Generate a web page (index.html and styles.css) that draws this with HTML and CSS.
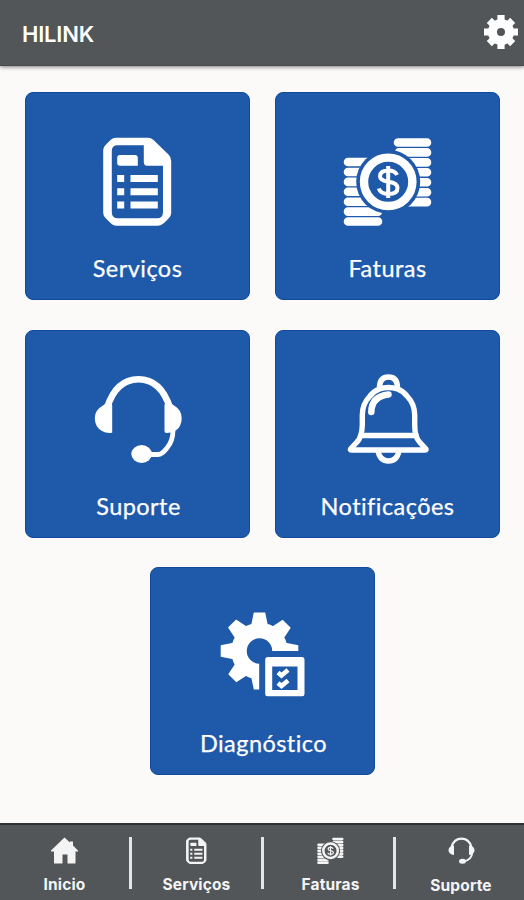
FILE: index.html
```
<!DOCTYPE html>
<html lang="pt-BR">
<head>
  <meta charset="UTF-8">
  <meta name="viewport" content="width=device-width, initial-scale=1.0">
  <title>HILINK</title>
  <link rel="stylesheet" href="styles.css">
</head>
<body>
  <svg class="icons" width="0" height="0">
    <symbol id="doc" viewBox="0 0 90 90">
      <path fill-rule="evenodd" d="M23 1.700H55Q58 1.700 60.500 4L75.500 18.500Q78.200 21 78.200 25V77Q78.200 80 75.500 82.500L71 87Q68 89.700 65 89.700H23Q20 89.700 17.500 87L13 82.500Q10.200 80 10.200 77V14Q10.200 11 13 8.500L17.500 4Q20 1.700 23 1.700ZM24.500 9.300Q18.800 9.300 18.800 15V76Q18.800 82.300 25 82.300H64Q70 82.300 70 76V29.700H54Q50.800 29.700 50.800 26V9.300Z"/>
      <path d="M27 19H42Q44.800 19 44.800 22V29.700H27Q24.200 29.700 24.200 27V22Q24.200 19 27 19ZM24.200 39h7v7h-7zM37.500 39h27.300v7H37.500zM24.200 52.300h7v7h-7zM37.500 52.300h27.300v7H37.500zM24.200 65.500h7v7h-7zM37.500 65.500h27.300v7H37.500z"/>
    </symbol>
    <symbol id="coins" viewBox="0 0 90 90">
      <g fill="none" stroke="currentColor" stroke-width="8.600" stroke-linecap="round">
        <path d="M5 26h28M5 36h28M5 45.900h28M5 55.800h28M5 65.700h28M5 75.600h30M5 85.500h30"/>
        <path d="M55 6.500h29M56 16.400h28M56 26.400h28M56 36.300h28M56 46.300h28M56 56.200h28M56 66.100h28"/>
      </g>
      <circle class="gap" cx="45.200" cy="45.800" r="32"/>
      <circle cx="45.200" cy="45.800" r="24.200" fill="none" stroke="currentColor" stroke-width="8.400"/>
      <path d="M54 39Q52 34.500 45.500 34.500Q37 34.500 37 40.300Q37 44.500 45.500 45.800Q54.500 47 54.500 52Q54.500 58 45.500 58Q37.500 58 35.800 52.500M45.200 30v32" fill="none" stroke="currentColor" stroke-width="4"/>
    </symbol>
  </svg>

  <div class="app">
    <header class="topbar">
      <h1>HILINK</h1>
      <svg class="settings" viewBox="-17 -17 34 34">
        <circle r="8.500" fill="none" stroke="currentColor" stroke-width="9"/>
        <g stroke="currentColor" stroke-width="7.200">
          <path d="M0-10V-17M0 10V17M-10 0H-17M10 0H17"/>
          <path d="M0-10V-16.500M0 10V16.500M-10 0H-16.500M10 0H16.500" transform="rotate(45)"/>
        </g>
      </svg>
    </header>

    <main class="menu">
      <a class="card">
        <svg class="card-icon"><use href="#doc"/></svg>
        <span>Serviços</span>
      </a>
      <a class="card">
        <svg class="card-icon"><use href="#coins"/></svg>
        <span>Faturas</span>
      </a>
      <a class="card">
        <svg class="card-icon" viewBox="0 0 90 90">
          <path d="M14 34C20 15 31 5.300 45.500 5.300S71 15 77 34" fill="none" stroke="currentColor" stroke-width="6.600"/>
          <path d="M19.200 31Q19 28.500 16 28.500Q13 28.500 10 31.500Q1.800 36 1.800 44Q1.800 53 9 57Q13 59.500 19.200 58.800ZM71.500 31Q71.500 28.500 75 28.500Q78 28.500 81 31.500Q88.700 36 88.700 44Q88.700 53 82 57Q78 59 73.500 59Q71.500 59 71.500 57Z"/>
          <path d="M80 56Q80 67 74 74Q69 80.500 65 80.500H55" fill="none" stroke="currentColor" stroke-width="4.800"/>
          <ellipse cx="48.600" cy="80" rx="10.300" ry="9"/>
        </svg>
        <span class="shift">Suporte</span>
      </a>
      <a class="card">
        <svg class="card-icon" viewBox="0 0 90 90">
          <g fill="none" stroke="currentColor" stroke-width="5.400" stroke-linecap="round" stroke-linejoin="round">
            <path d="M36.500 15Q31 17 27 22Q19.300 30 19.300 41V51Q19 63 14 68L8 74.500Q6.500 76 8.500 76H82Q84 76 82.500 74.500L76.500 68Q71.700 63 71.700 51V41Q71.700 30 64 22Q60 17 54.500 15Q45.500 12 36.500 15Z"/>
            <path d="M18 61.500H73M36.500 14Q36.500 3 45.500 3T54.500 14M35 77Q37 87 45.500 87T56 77"/>
            <path d="M28.300 38Q28.500 22.500 45.500 20.500" stroke-width="6.500"/>
          </g>
        </svg>
        <span>Notificações</span>
      </a>
      <a class="card">
        <svg class="card-icon" viewBox="0 0 90 90">
          <g transform="translate(41.500 40)">
            <circle r="20.500" fill="none" stroke="currentColor" stroke-width="15.500"/>
            <path id="teeth" d="M-8.500-25L-5.700-38.500H5.700L8.500-25ZM-8.500 25L-5.700 38.500H5.700L8.500 25ZM-25-8.500L-38.800-5.700V5.700L-25 8.500ZM25-8.500L38.800-5.700V5.700L25 8.500Z"/>
            <use href="#teeth" transform="rotate(45)"/>
          </g>
          <path class="gap" d="M41.200 40H90V90H41.200Z"/>
          <path fill-rule="evenodd" d="M49.500 46H84.200Q86.500 46 86.500 48.500V83Q86.500 85.300 84.200 85.300H49.500Q47.200 85.300 47.200 83V48.500Q47.200 46 49.500 46ZM54.200 55.500V79H79.500V55.500Z"/>
          <path d="M60 61.500L63.500 64.500L70 59M60 72L63.500 75L70 69.500" fill="none" stroke="currentColor" stroke-width="4.600"/>
        </svg>
        <span class="shift">Diagnóstico</span>
      </a>
    </main>

    <nav class="tabbar">
      <a class="tab">
        <svg viewBox="0 0 27 27"><path d="M13.500.500L19 5.500V4.500H22V8.500L27 13.500V14.500H24.500V26.500H16.500V17.500H11.500V26.500H3V14.500H0V13.500Z"/></svg>
        <span>Inicio</span>
      </a>
      <a class="tab">
        <svg><use href="#doc"/></svg>
        <span>Serviços</span>
      </a>
      <a class="tab tab-bills">
        <svg><use href="#coins"/></svg>
        <span>Faturas</span>
      </a>
      <a class="tab tab-support">
        <svg viewBox="0 0 27 27">
          <path d="M3.500 10Q6 1.600 13.500 1.600T23.500 10M24.300 15.500Q23.500 23.500 15 24.500" fill="none" stroke="currentColor" stroke-width="2.100"/>
          <path d="M6 8.500V18Q.500 17 .500 13.200T6 8.500ZM21 8.500V18Q26.500 17 26.500 13.200T21 8.500Z"/>
          <ellipse cx="14.500" cy="24.300" rx="3.500" ry="2.500"/>
        </svg>
        <span>Suporte</span>
      </a>
    </nav>
  </div>
</body>
</html>
```
FILE: styles.css
```
* {
  box-sizing: border-box;
}
body {
  margin: 0;
  font-family: Lato, "Open Sans", sans-serif;
  background-color: #fcfaf9;
  color: #fff;
}
svg {
  display: block;
  flex: none;
  fill: currentColor;
}
.icons {
  display: none;
}
.app {
  display: flex;
  flex-direction: column;
  height: 900px;
}
.topbar {
  display: flex;
  align-items: center;
  justify-content: space-between;
  height: 66px;
  padding: 2px 6px 3px 22px;
  background-color: #525659;
  border-bottom: 1px solid #484b4d;
  box-shadow: 0 1px 4px rgba(0, 0, 0, 0.5);
}
.topbar h1 {
  margin: 4px 0 0;
  font-family: Inter, sans-serif;
  font-size: 22px;
  font-weight: 600;
  line-height: 28px;
  letter-spacing: -0.2px;
}
.settings {
  width: 34px;
  height: 34px;
}
.menu {
  flex: 1;
  display: flex;
  flex-wrap: wrap;
  justify-content: center;
  align-content: flex-start;
  gap: 29.5px 25px;
  padding: 26px 24px 0 25px;
}
.card {
  --gap: #1f59a9;
  display: flex;
  flex-direction: column;
  align-items: center;
  width: 225px;
  height: 208px;
  padding-top: 43px;
  background-color: #1f59a9;
  border: 1px solid #124a9f;
  border-radius: 8px;
}
.card-icon {
  width: 90px;
  height: 90px;
}
.card span {
  margin-top: 27px;
  font-size: 23.5px;
  line-height: 30px;
  letter-spacing: 0.45px;
  white-space: nowrap;
  -webkit-text-stroke: 0.25px #fff;
}
.card .shift {
  padding-left: 2px;
}
.gap {
  fill: var(--gap);
}
.tabbar {
  display: grid;
  grid-template-columns: 129px 132px 132px 131px;
  height: 77px;
  padding-top: 12px;
  background-color: #525659;
  border-top: 2px solid #303335;
}
.tab {
  --gap: #525659;
  display: flex;
  flex-direction: column;
  align-items: center;
  height: 52px;
  color: #f4f4f4;
}
.tab + .tab {
  border-left: 3px solid #e4e5e5;
}
.tab svg {
  width: 27px;
  height: 27px;
}
.tab span {
  margin-top: 10px;
  font-family: Inter, sans-serif;
  font-size: 15.5px;
  font-weight: 700;
  line-height: 22px;
  letter-spacing: 0.15px;
}
.tab-bills {
  padding-left: 4px;
}
.tab-support {
  padding-left: 2px;
}
.tab-support span {
  margin-top: 11px;
}
```
